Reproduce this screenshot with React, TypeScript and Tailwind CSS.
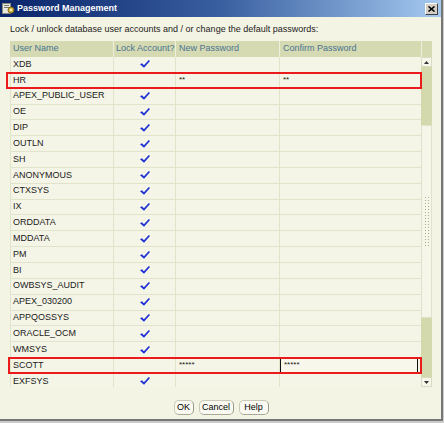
import React from 'react';

const users = [
  { name: 'XDB', locked: true },
  { name: 'HR', locked: false, pw: '**', confirm: '**' },
  { name: 'APEX_PUBLIC_USER', locked: true },
  { name: 'OE', locked: true },
  { name: 'DIP', locked: true },
  { name: 'OUTLN', locked: true },
  { name: 'SH', locked: true },
  { name: 'ANONYMOUS', locked: true },
  { name: 'CTXSYS', locked: true },
  { name: 'IX', locked: true },
  { name: 'ORDDATA', locked: true },
  { name: 'MDDATA', locked: true },
  { name: 'PM', locked: true },
  { name: 'BI', locked: true },
  { name: 'OWBSYS_AUDIT', locked: true },
  { name: 'APEX_030200', locked: true },
  { name: 'APPQOSSYS', locked: true },
  { name: 'ORACLE_OCM', locked: true },
  { name: 'WMSYS', locked: true },
  { name: 'SCOTT', locked: false, pw: '*****', confirm: '*****', editing: true },
  { name: 'EXFSYS', locked: true },
];

const Check = () => (
  <svg width="10" height="8" viewBox="0 0 10 8">
    <polygon points="0,4.2 2,3.2 3.9,5.2 8.8,0 10,0.9 4,7.8" fill="#1c2fd2" />
  </svg>
);

const Btn = ({ label, w }: { label: string; w: string }) => (
  <button
    type="button"
    className={`${w} h-[15px] rounded-[5px] border border-[#c9c9b8] border-r-[#9a9a8a] border-b-[#a9a999] bg-[#fafaf2] text-[9px] leading-none text-black`}
  >
    {label}
  </button>
);

const App = () => {
  return (
    <div className="w-[444px] h-[423px] bg-[#cbcbcb] font-['Liberation_Sans',Arial,sans-serif]">
      <div className="relative w-[443px] h-[421px] bg-[#f4f4e4] border-r-2 border-b-2 border-[#777777] flex flex-col">
        {/* title bar */}
        <div className="h-[17px] shrink-0 bg-gradient-to-r from-[#0a246a] via-[#3a5fa0] to-[#a6caf0] flex items-center pl-[2px] pr-[3px]">
          <svg width="13" height="12" viewBox="0 0 13 12">
            <rect x="0.5" y="0.5" width="8" height="10" fill="#e8e8e0" stroke="#8a8a80" />
            <rect x="2" y="2" width="5" height="1" fill="#7a7a70" />
            <rect x="2" y="4" width="5" height="1" fill="#7a7a70" />
            <circle cx="9" cy="7" r="3" fill="#d8b840" stroke="#806820" />
            <rect x="8" y="6" width="2" height="2" fill="#f8f0b0" />
          </svg>
          <span className="ml-[2px] text-white font-bold text-[9px] leading-none">Password Management</span>
          <div className="ml-auto w-[13px] h-[12px] bg-[#d4d0c8] border border-t-white border-l-white border-r-[#404040] border-b-[#404040] flex items-center justify-center">
            <svg width="7" height="6" viewBox="0 0 7 6">
              <path d="M0.5 0.5 L6.5 5.5 M6.5 0.5 L0.5 5.5" stroke="#000" strokeWidth="1.6" />
            </svg>
          </div>
        </div>

        <p className="pt-[7px] pl-[10px] text-[9px] leading-[11px] text-[#222]">
          Lock / unlock database user accounts and / or change the default passwords:
        </p>

        {/* table */}
        <div className="mt-[6px] ml-[10px] w-[422px] h-[346px] shrink-0 flex overflow-hidden">
          <div className="w-[411px] flex flex-col">
            <div className="h-[16px] shrink-0 grid grid-cols-[104px_62px_104px_141px] bg-[#d5dab3] text-[9px] text-[#4a7391]">
              <div className="pl-[3px] flex items-center border-r border-[#eef0de]">User Name</div>
              <div className="pl-[2px] flex items-center border-r border-[#eef0de]">Lock Account?</div>
              <div className="pl-[3px] flex items-center border-r border-[#eef0de]">New Password</div>
              <div className="pl-[3px] flex items-center">Confirm Password</div>
            </div>
            {users.map((u) => (
              <div
                key={u.name}
                className="h-[15.85px] shrink-0 grid grid-cols-[104px_62px_104px_141px] border-b border-[#e0e4ca] bg-[#f5f5e7] text-[9px] text-[#1a1a1a]"
              >
                <div className="pl-[2px] flex items-center border-l border-r border-[#e0e4ca]">{u.name}</div>
                <div className="flex items-center justify-center border-r border-[#e0e4ca]">{u.locked && <Check />}</div>
                <div className="pl-[3px] flex items-center border-r border-[#e0e4ca] text-[8px]">{u.pw}</div>
                <div className="flex items-stretch">
                  {u.editing ? (
                    <div className="w-[138px] border-[1.5px] border-[#111] bg-[#f7f7ec] pl-[3px] flex items-center text-[8px]">
                      {u.confirm}
                    </div>
                  ) : (
                    <div className="pl-[3px] flex items-center text-[8px]">{u.confirm}</div>
                  )}
                </div>
              </div>
            ))}
          </div>

          {/* scrollbar */}
          <div className="w-[11px] flex flex-col">
            <div className="h-[16px] shrink-0 bg-[#d5dab3] border-l border-[#eef0de]" />
            <div className="h-[10px] shrink-0 bg-[#f6f6ea] border border-[#d8dcc0] flex items-center justify-center">
              <svg width="5" height="3" viewBox="0 0 5 3">
                <polygon points="0,3 2.5,0 5,3" fill="#333" />
              </svg>
            </div>
            <div className="h-[58px] shrink-0 bg-[#d3d9ad]" />
            <div className="h-[193px] shrink-0 bg-[#f5f5e8] border border-[#dfe2cc] flex items-center justify-center">
              <div className="w-[5px] h-[51px] bg-[radial-gradient(circle,#a8ac98_0.8px,transparent_1px)] bg-[length:3px_3px]" />
            </div>
            <div className="flex-1 bg-[#d3d9ad]" />
            <div className="h-[10px] shrink-0 bg-[#f6f6ea] border border-[#d8dcc0] flex items-center justify-center">
              <svg width="5" height="3" viewBox="0 0 5 3">
                <polygon points="0,0 2.5,3 5,0" fill="#333" />
              </svg>
            </div>
          </div>
        </div>

        {/* buttons */}
        <div className="mt-[13px] flex justify-center gap-[5px] pl-[1px]">
          <Btn label="OK" w="w-[20px]" />
          <Btn label="Cancel" w="w-[35px]" />
          <Btn label="Help" w="w-[30px]" />
        </div>

        {/* annotation boxes */}
        <div className="absolute left-[6px] top-[71.5px] w-[416px] h-[17px] border-2 border-[#ec1b1b]" />
        <div className="absolute left-[8px] top-[357px] w-[414px] h-[17px] border-2 border-[#ec1b1b]" />
      </div>
    </div>
  );
};

export default App;
